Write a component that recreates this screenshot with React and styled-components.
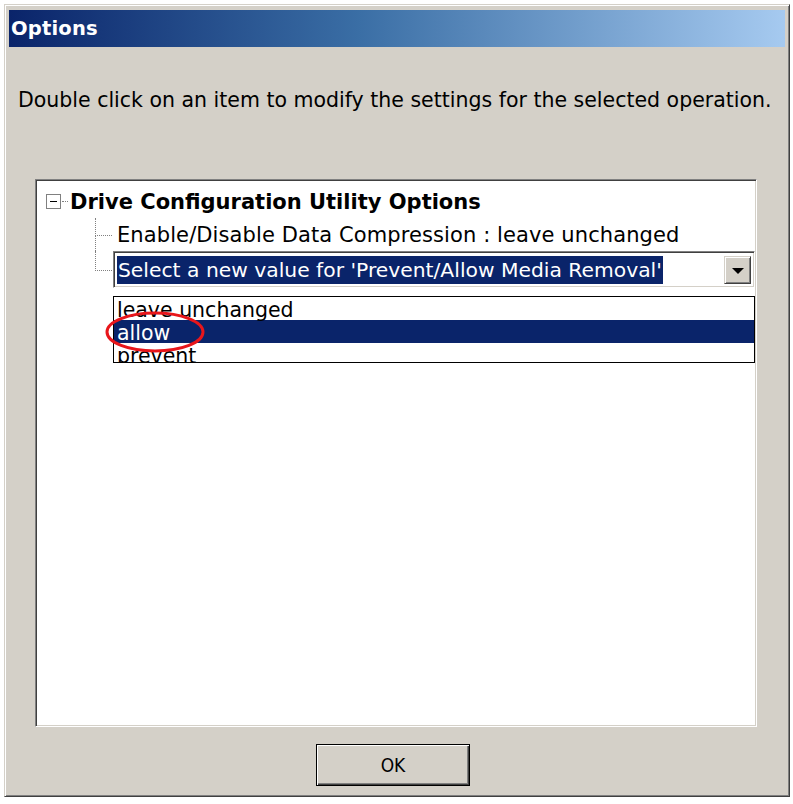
import React from "react";
import styled, { createGlobalStyle } from "styled-components";

const GlobalStyle = createGlobalStyle`
  html, body { margin: 0; padding: 0; background: #ffffff; }
  body { font-family: "DejaVu Sans", "Liberation Sans", sans-serif; }
  #root { padding: 4px 0 0 4px; }
`;

const Window = styled.div`
  box-sizing: border-box;
  width: 786px;
  height: 793px;
  background: #d4d0c8;
  border: 1px solid;
  border-color: #d4d0c8 #404040 #404040 #d4d0c8;
  box-shadow: inset 1px 1px 0 #ffffff, inset -1px -1px 0 #808080;
  padding: 5px 4px 4px 4px;
  display: flex;
  flex-direction: column;
`;

const TitleBar = styled.div`
  height: 37px;
  display: flex;
  align-items: center;
  padding-left: 2px;
  background: linear-gradient(to right, #0a246a 0%, #3a6ea5 45%, #a6caf0 100%);
  color: #ffffff;
  font-weight: bold;
  font-size: 19.5px;
  letter-spacing: 0.2px;
`;

const Description = styled.p`
  margin: 41px 0 0 9px;
  font-size: 20.5px;
  line-height: 25px;
  color: #000;
  white-space: nowrap;
`;

const TreeBox = styled.div`
  box-sizing: border-box;
  margin: 66px 0 0 26px;
  width: 722px;
  height: 548px;
  background: #ffffff;
  border: 1px solid;
  border-color: #808080 #ffffff #ffffff #808080;
  box-shadow: inset 1px 1px 0 #404040, inset -1px -1px 0 #d4d0c8;
  padding: 5px 1px 0 10px;
  font-size: 21px;
  color: #000;
`;

const RootRow = styled.div`
  height: 33px;
  display: flex;
  align-items: center;
`;

const Expander = styled.span`
  box-sizing: border-box;
  width: 15px;
  height: 15px;
  border: 1px solid #808080;
  background: #fff;
  display: flex;
  align-items: center;
  justify-content: center;
  &::after {
    content: "";
    width: 7px;
    height: 1px;
    background: #000;
  }
`;

const ShortDots = styled.span`
  width: 6px;
  margin: 0 2px 0 1px;
  border-top: 1px dotted #808080;
`;

const RootLabel = styled.span`
  font-weight: bold;
  font-size: 21px;
  white-space: nowrap;
`;

const Children = styled.div`
  margin-left: 49px;
  display: flex;
  flex-direction: column;
`;

const ChildRow = styled.div`
  height: ${(p) => p.$h}px;
  display: flex;
  align-items: stretch;
  position: relative;
`;

const Connector = styled.span`
  width: 17px;
  flex: none;
  display: flex;
  flex-direction: column;
  &::before {
    content: "";
    height: 50%;
    border-left: 1px dotted #808080;
    border-bottom: 1px dotted #808080;
  }
  &::after {
    content: "";
    flex: 1;
    border-left: ${(p) => (p.$last ? "none" : "1px dotted #808080")};
  }
`;

const ChildLabel = styled.span`
  padding-left: 5px;
  display: flex;
  align-items: center;
  white-space: nowrap;
  letter-spacing: 0.1px;
`;

const ComboWrap = styled.div`
  flex: 1;
  position: relative;
  margin-left: 1px;
`;

const Combo = styled.div`
  box-sizing: border-box;
  height: 100%;
  background: #fff;
  border: 1px solid;
  border-color: #808080 #ffffff #ffffff #808080;
  box-shadow: inset 1px 1px 0 #404040, inset -1px -1px 0 #d4d0c8;
  padding: 4px 3px 3px 3px;
  display: flex;
  align-items: stretch;
  justify-content: space-between;
`;

const Selected = styled.span`
  background: #0a246a;
  color: #fff;
  display: flex;
  align-items: center;
  padding: 0 1px;
  white-space: nowrap;
  font-size: 20.3px;
`;

const DropButton = styled.span`
  box-sizing: border-box;
  width: 27px;
  background: #d4d0c8;
  border: 1px solid;
  border-color: #d4d0c8 #404040 #404040 #d4d0c8;
  box-shadow: inset 1px 1px 0 #ffffff, inset -1px -1px 0 #808080;
  display: flex;
  align-items: center;
  justify-content: center;
  &::after {
    content: "";
    width: 0;
    height: 0;
    border-left: 6px solid transparent;
    border-right: 6px solid transparent;
    border-top: 6px solid #000;
    margin-top: 2px;
  }
`;

const DropList = styled.ul`
  position: absolute;
  left: 0;
  right: 0;
  top: calc(100% + 8px);
  height: 65px;
  overflow: hidden;
  margin: 0;
  padding: 0;
  list-style: none;
  background: #fff;
  border: 1px solid #000;
`;

const Option = styled.li`
  box-sizing: border-box;
  height: 23px;
  padding: 4px 0 0 3px;
  line-height: 19px;
  font-size: 20.5px;
  white-space: nowrap;
  background: ${(p) => (p.$active ? "#0a246a" : "#fff")};
  color: ${(p) => (p.$active ? "#fff" : "#000")};
`;

const Annotation = styled.svg`
  position: absolute;
  left: -9px;
  top: 60px;
  width: 102px;
  height: 42px;
  pointer-events: none;
`;

const Footer = styled.div`
  margin-top: 17px;
  display: flex;
  justify-content: center;
`;

const OkButton = styled.button`
  box-sizing: border-box;
  width: 154px;
  height: 42px;
  background: #d4d0c8;
  border: 1px solid #000;
  box-shadow: inset 1px 1px 0 #ffffff, inset -1px -1px 0 #404040,
    inset -2px -2px 0 #808080;
  font-family: "DejaVu Sans Condensed", "Liberation Sans Narrow", "DejaVu Sans", sans-serif;
  font-size: 19px;
  color: #000;
  padding: 0;
  margin-left: -8px;
`;

export default function App() {
  return (
    <>
      <GlobalStyle />
      <Window>
        <TitleBar>Options</TitleBar>
        <Description>
          Double click on an item to modify the settings for the selected operation.
        </Description>
        <TreeBox>
          <RootRow>
            <Expander />
            <ShortDots />
            <RootLabel>Drive Configuration Utility Options</RootLabel>
          </RootRow>
          <Children>
            <ChildRow $h={33}>
              <Connector />
              <ChildLabel>Enable/Disable Data Compression : leave unchanged</ChildLabel>
            </ChildRow>
            <ChildRow $h={37}>
              <Connector $last />
              <ComboWrap>
                <Combo>
                  <Selected>Select a new value for 'Prevent/Allow Media Removal'</Selected>
                  <DropButton />
                </Combo>
                <DropList>
                  <Option>leave unchanged</Option>
                  <Option $active>allow</Option>
                  <Option>prevent</Option>
                </DropList>
                <Annotation viewBox="0 0 102 42">
                  <ellipse cx="51" cy="21" rx="48" ry="19" fill="none" stroke="#e8161b" strokeWidth="3" />
                </Annotation>
              </ComboWrap>
            </ChildRow>
          </Children>
        </TreeBox>
        <Footer>
          <OkButton>OK</OkButton>
        </Footer>
      </Window>
    </>
  );
}
